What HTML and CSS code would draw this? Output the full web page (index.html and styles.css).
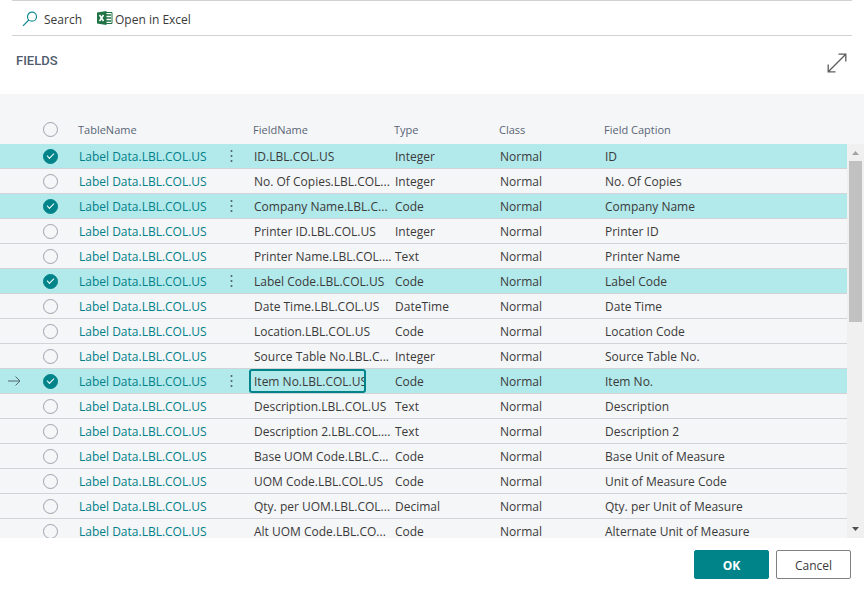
FILE: index.html
```
<!DOCTYPE html>
<html lang="en">
<head>
<meta charset="utf-8">
<title>Fields</title>
<link rel="stylesheet" href="styles.css">
</head>
<body>
<nav class="toolbar">
  <button class="action" type="button">
    <svg width="16" height="16" viewBox="0 0 16 16" fill="none" stroke="#108a91" stroke-width="1.2"><circle cx="10" cy="5.700" r="4.500"/><path d="M6.800 9 1 14.800"/></svg>
    <span>Search</span>
  </button>
  <button class="action action-excel" type="button">
    <svg width="16" height="16" viewBox="0 0 16 16"><path d="M8 1.500h7v11H8z" fill="#fff" stroke="#217346"/><path d="M9 4h5M9 7h5M9 10h5" stroke="#217346" stroke-width="1.500"/><path d="M0 1.500 9.500 0v14L0 12.500z" fill="#217346"/><path d="m2.500 4 4 6M6.500 4l-4 6" stroke="#fff" stroke-width="1.600"/></svg>
    <span>Open in Excel</span>
  </button>
</nav>
<header class="heading">
  <h1>FIELDS</h1>
  <button class="expand" type="button" aria-label="Expand">
    <svg width="20" height="20" viewBox="0 0 20 20" fill="none" stroke="#5c5c5c" stroke-width="1.3"><path d="M1.500 18.500 18.500 1.500M11.500 1.200h7.300v7.300M1.200 11.500v7.300h7.300"/></svg>
  </button>
</header>
<main class="list">
  <div class="grid">
    <table>
      <colgroup><col class="c-mark"><col class="c-check"><col class="c-table"><col class="c-menu"><col class="c-field"><col class="c-type"><col class="c-class"><col></colgroup>
      <thead>
        <tr><th></th><th><input type="checkbox" aria-label="Select all"></th><th>TableName</th><th></th><th>FieldName</th><th>Type</th><th>Class</th><th>Field Caption</th></tr>
      </thead>
      <tbody id="rows"></tbody>
    </table>
  </div>
  <div class="scrollbar">
    <svg width="17" height="17" viewBox="0 0 17 17"><path d="m5 11 3.500-4 3.500 4z" fill="#a3a3a3"/></svg>
    <div class="thumb"></div>
    <svg width="17" height="17" viewBox="0 0 17 17"><path d="m5 6 3.500 4L12 6z" fill="#505050"/></svg>
  </div>
</main>
<footer class="buttons">
  <button class="btn primary" type="button">OK</button>
  <button class="btn" type="button">Cancel</button>
</footer>
<script src="rows.js"></script>
</body>
</html>
```
FILE: styles.css
```
* {
  box-sizing: border-box;
}

body {
  margin: 0;
  height: 100vh;
  display: flex;
  flex-direction: column;
  background: #fff;
  color: #3a3a3a;
  font: 12px/20px "Open Sans", "Noto Sans", sans-serif;
}

button,
input {
  font: inherit;
  color: inherit;
}

.toolbar {
  display: flex;
  flex: none;
  gap: 15px;
  height: 36px;
  margin: 0 12px;
  padding: 0 10px;
  border-top: 1px solid #d0d3d6;
  border-bottom: 1px solid #d0d3d6;
}

.action {
  display: flex;
  align-items: center;
  gap: 6px;
  padding: 2px 0 0;
  border: 0;
  background: none;
}

.action span {
  padding-top: 2px;
}

.action-excel {
  gap: 2px;
}

.heading {
  display: flex;
  flex: none;
  justify-content: space-between;
  align-items: flex-start;
  height: 58px;
  padding: 15px 17px 0 16px;
}

h1 {
  margin: 0;
  font-size: 13px;
  line-height: 20px;
  font-weight: 500;
  font-family: Roboto, sans-serif;
  color: #505c6d;
}

.expand {
  display: flex;
  padding: 2px 0 0;
  border: 0;
  background: none;
}

.list {
  flex: 1;
  min-height: 0;
  display: flex;
  background: #f5f6f8;
}

.grid {
  flex: 1;
  min-width: 0;
  overflow: hidden;
}

table {
  width: 100%;
  table-layout: fixed;
  border-collapse: separate;
  border-spacing: 0;
}

.c-mark { width: 36px; }
.c-check { width: 42px; }
.c-table { width: 142px; }
.c-menu { width: 33px; }
.c-field { width: 141px; }
.c-type { width: 105px; }
.c-class { width: 105px; }

th {
  height: 50px;
  padding: 22px 0 0;
  text-align: left;
  font-size: 11px;
  font-weight: 400;
  color: #5a6575;
}

td {
  height: 25px;
  padding: 2px 0 0 1px;
  line-height: 22px;
  white-space: nowrap;
  border-bottom: 1px solid #d2d3d9;
}

.selected td {
  background: #b2e9eb;
}

td:first-child {
  padding: 0 0 0 8px;
}

td:nth-child(2),
th:nth-child(2) {
  padding-left: 7px;
}

th:nth-child(2) {
  padding-top: 20px;
}

td:nth-child(2),
td:nth-child(4) {
  padding-top: 0;
}

td svg {
  display: block;
}

td a {
  color: #008089;
  text-decoration: none;
}

input[type="checkbox"] {
  appearance: none;
  display: grid;
  place-items: center;
  width: 15px;
  height: 15px;
  margin: 0;
  border: 1px solid #9da2ac;
  border-radius: 50%;
}

input[type="checkbox"]:checked {
  border-color: #008489;
  background: #008489;
}

input[type="checkbox"]:checked::after {
  content: "";
  width: 6px;
  height: 3px;
  margin-bottom: 2px;
  border: solid #fff;
  border-width: 0 0 1px 1px;
  transform: rotate(-45deg);
}

.more {
  display: block;
  padding: 0 8px;
  border: 0;
  background: none;
}

td.current {
  padding: 0;
}

.edit {
  display: block;
  width: 117px;
  height: 24px;
  margin-left: -4px;
  padding: 0 0 0 3px;
  border: 2px solid #008489;
  border-radius: 3px;
  outline: 0;
  background: none;
}

.scrollbar {
  flex: none;
  display: flex;
  flex-direction: column;
  width: 17px;
  margin-top: 50px;
  background: #f0f0f0;
}

.thumb {
  height: 161px;
  margin: 0 2px auto;
  background: #c1c1c1;
}

.buttons {
  flex: none;
  display: flex;
  justify-content: flex-end;
  gap: 7px;
  padding: 12px 13px 13px;
}

.btn {
  width: 75px;
  height: 29px;
  padding: 2px 0 0;
  border: 1px solid #7f8083;
  border-radius: 2px;
  background: #fff;
}

.primary {
  border-color: #008489;
  background: #008489;
  color: #fff;
  font-weight: 700;
}
```
FILE: rows.js
```
const rows = [
  ["ID.LBL.COL.US", "Integer", "ID", true],
  ["No. Of Copies.LBL.COL...", "Integer", "No. Of Copies"],
  ["Company Name.LBL.C...", "Code", "Company Name", true],
  ["Printer ID.LBL.COL.US", "Integer", "Printer ID"],
  ["Printer Name.LBL.COL....", "Text", "Printer Name"],
  ["Label Code.LBL.COL.US", "Code", "Label Code", true],
  ["Date Time.LBL.COL.US", "DateTime", "Date Time"],
  ["Location.LBL.COL.US", "Code", "Location Code"],
  ["Source Table No.LBL.C...", "Integer", "Source Table No."],
  ["Item No.LBL.COL.US", "Code", "Item No.", true, true],
  ["Description.LBL.COL.US", "Text", "Description"],
  ["Description 2.LBL.COL....", "Text", "Description 2"],
  ["Base UOM Code.LBL.C...", "Code", "Base Unit of Measure"],
  ["UOM Code.LBL.COL.US", "Code", "Unit of Measure Code"],
  ["Qty. per UOM.LBL.COL...", "Decimal", "Qty. per Unit of Measure"],
  ["Alt UOM Code.LBL.CO...", "Code", "Alternate Unit of Measure"]
];

const arrow = '<svg width="13" height="12" viewBox="0 0 13 12" fill="none" stroke="#51666a" stroke-width="1"><path d="M0 6h12M7.500 1.500 12 6l-4.500 4.500"/></svg>';
const dots = '<svg width="5" height="14" viewBox="0 0 5 14" fill="#4b5f63"><circle cx="2.500" cy="2" r="1"/><circle cx="2.500" cy="7" r="1"/><circle cx="2.500" cy="12" r="1"/></svg>';

document.getElementById("rows").innerHTML = rows.map(([field, type, caption, selected, current]) => `
  <tr class="${selected ? "selected" : ""}">
    <td>${current ? arrow : ""}</td>
    <td><input type="checkbox" aria-label="Select ${caption}" ${selected ? "checked" : ""}></td>
    <td><a href="#">Label Data.LBL.COL.US</a></td>
    <td>${selected ? `<button class="more" type="button" aria-label="More options">${dots}</button>` : ""}</td>
    <td class="${current ? "current" : ""}">${current ? `<input class="edit" aria-label="FieldName" value="${field}">` : field}</td>
    <td>${type}</td>
    <td>Normal</td>
    <td>${caption}</td>
  </tr>`).join("");
```
